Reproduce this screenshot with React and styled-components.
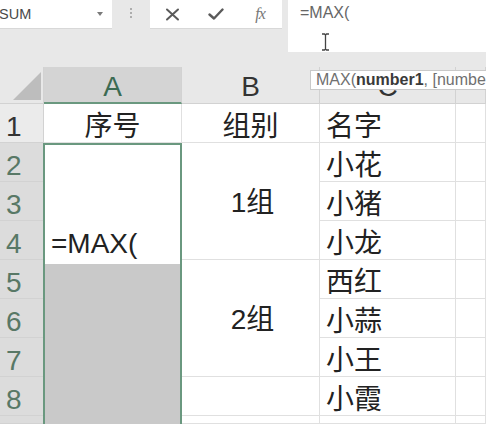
import React from 'react'
import styled, { createGlobalStyle } from 'styled-components'

const GREEN = '#6a987f'
const GRID = '#e0e0e0'
const HEAD_LINE = '#d2d2d2'

const GlobalStyle = createGlobalStyle`
  html, body {
    margin: 0;
    padding: 0;
    background: #e8e8e8;
  }
  body {
    font-family: "Liberation Sans", "Noto Sans CJK SC", sans-serif;
    overflow: hidden;
  }
`

const Page = styled.div`
  position: relative;
  width: 486px;
  height: 424px;
  overflow: hidden;
  background: #e8e8e8;
`

const Toolbar = styled.div`
  display: flex;
  align-items: flex-start;
  height: 67px;
`

const NameBox = styled.div`
  width: 112px;
  height: 28px;
  box-sizing: border-box;
  padding-right: 9px;
  display: flex;
  align-items: center;
  justify-content: space-between;
  background: #fff;
  box-shadow: 0 1px 0 #d8d8d8;
  font-size: 14.5px;
  color: #4a4a4a;
`

const NameText = styled.span`
  margin-left: -1px;
`

const Caret = styled.span`
  width: 0;
  height: 0;
  border-left: 3px solid transparent;
  border-right: 3px solid transparent;
  border-top: 4px solid #7a7a7a;
`

const Grip = styled.div`
  width: 38px;
  height: 26px;
  display: flex;
  flex-direction: column;
  align-items: center;
  justify-content: center;
  gap: 2px;
`

const Dot = styled.span`
  width: 2px;
  height: 2px;
  border-radius: 50%;
  background: #9a9a9a;
`

const FxButtons = styled.div`
  width: 132px;
  height: 28px;
  display: flex;
  align-items: center;
  background: #fff;
  box-shadow: 0 1px 0 #d8d8d8;
`

const FxButton = styled.div`
  width: 44px;
  display: flex;
  justify-content: center;
  align-items: center;
  color: #5a5a5a;
`

const FxLabel = styled.span`
  font-family: "Liberation Serif", serif;
  font-style: italic;
  font-size: 16px;
  color: #777;
  letter-spacing: -1px;
`

const FormulaBar = styled.div`
  position: relative;
  flex: 1;
  height: 52px;
  margin-left: 6px;
  box-sizing: border-box;
  padding: 4px 0 0 12px;
  background: #fff;
  font-size: 16px;
  line-height: 18px;
  color: #666;
`

const Beam = styled.svg`
  position: absolute;
  left: 33px;
  top: 33px;
`

const Sheet = styled.div`
  display: grid;
  grid-template-columns: 44px 138px 138px 136px 1fr;
  grid-template-rows: 37px repeat(8, 39px) 1fr;
  height: 357px;
  background: #fff;
  font-size: 28px;
  color: #222;
`

const Corner = styled.div`
  position: relative;
  background: #e8e8e8;
  border-right: 1px solid ${HEAD_LINE};
  border-bottom: 1px solid ${HEAD_LINE};
  &::after {
    content: '';
    position: absolute;
    right: 2px;
    bottom: 3px;
    width: 0;
    height: 0;
    border-left: 28px solid transparent;
    border-bottom: 28px solid #bdbdbd;
  }
`

const ColHead = styled.div`
  box-sizing: border-box;
  display: flex;
  align-items: center;
  justify-content: center;
  padding-top: 4px;
  background: ${p => (p.$active ? '#d4d4d4' : '#e8e8e8')};
  color: ${p => (p.$active ? '#3c6b53' : '#333')};
  border-right: 1px solid ${HEAD_LINE};
  border-bottom: ${p => (p.$active ? `2px solid ${GREEN}` : `1px solid ${HEAD_LINE}`)};
`

const RowHead = styled.div`
  box-sizing: border-box;
  display: flex;
  align-items: flex-end;
  padding: 0 0 0 6px;
  line-height: 30px;
  background: ${p => (p.$active ? '#dcdcdc' : '#ebebeb')};
  color: ${p => (p.$active ? '#587866' : '#333')};
  border-bottom: 1px solid ${HEAD_LINE};
  border-right: 1px solid ${p => (p.$active ? GREEN : HEAD_LINE)};
`

const Cell = styled.div`
  box-sizing: border-box;
  display: flex;
  align-items: ${p => (p.$middle ? 'center' : 'flex-end')};
  justify-content: ${p => (p.$center ? 'center' : 'flex-start')};
  padding: ${p => (p.$middle ? '4px 0 0 4px' : p.$center ? '0' : '0 0 0 6px')};
  line-height: 30px;
  border-right: 1px solid ${GRID};
  border-bottom: 1px solid ${GRID};
`

const Selection = styled.div`
  grid-column: 2;
  grid-row: 3 / 11;
  display: flex;
  flex-direction: column;
  border: 2px solid ${GREEN};
  border-bottom: none;
  margin-left: -1px;
`

const EditCell = styled.div`
  height: 115px;
  display: flex;
  align-items: flex-end;
  padding: 0 0 4px 6px;
  background: #fff;
  line-height: 32px;
  color: #222;
`

const Fill = styled.div`
  flex: 1;
  background: #c9c9c9;
`

const Tip = styled.div`
  position: absolute;
  left: 310px;
  top: 70px;
  height: 20px;
  width: 200px;
  box-sizing: border-box;
  padding-left: 5px;
  background: #fff;
  border: 1px solid #c9c9c9;
  font-size: 16px;
  line-height: 18px;
  color: #707070;
  white-space: nowrap;
`

const Arg = styled.b`
  color: #3a3a3a;
`

const names = ['小花', '小猪', '小龙', '西红', '小蒜', '小王', '小霞']

export default function App() {
  return (
    <Page>
      <GlobalStyle />
      <Toolbar>
        <NameBox>
          <NameText>SUM</NameText>
          <Caret />
        </NameBox>
        <Grip>
          <Dot />
          <Dot />
          <Dot />
        </Grip>
        <FxButtons>
          <FxButton>
            <svg width="15" height="13" viewBox="0 0 15 13">
              <path d="M2 1.5 L13 11.5 M13 1.5 L2 11.5" stroke="#5a5a5a" strokeWidth="2" strokeLinecap="round" fill="none" />
            </svg>
          </FxButton>
          <FxButton>
            <svg width="16" height="12" viewBox="0 0 16 12">
              <path d="M1.5 6.5 L6 10.5 L14.5 1.5" stroke="#5a5a5a" strokeWidth="2.4" strokeLinecap="round" strokeLinejoin="round" fill="none" />
            </svg>
          </FxButton>
          <FxButton>
            <FxLabel>fx</FxLabel>
          </FxButton>
        </FxButtons>
        <FormulaBar>
          =MAX(
          <Beam width="9" height="18" viewBox="0 0 9 18">
            <path d="M1 1 H3.5 L4.5 2 L5.5 1 H8 M4.5 2 V16 M1 17 H3.5 L4.5 16 L5.5 17 H8" stroke="#444" strokeWidth="1.3" fill="none" />
          </Beam>
        </FormulaBar>
      </Toolbar>

      <Sheet>
        <Corner />
        <ColHead $active>A</ColHead>
        <ColHead>B</ColHead>
        <ColHead>C</ColHead>
        <ColHead />

        {[1, 2, 3, 4, 5, 6, 7, 8, 9].map(n => (
          <RowHead key={n} $active={n > 1} style={{ gridColumn: 1, gridRow: n + 1 }}>
            {n < 9 ? n : ''}
          </RowHead>
        ))}

        <Cell $center style={{ gridColumn: 2, gridRow: 2 }}>序号</Cell>
        <Selection>
          <EditCell>=MAX(</EditCell>
          <Fill />
        </Selection>

        <Cell $center style={{ gridColumn: 3, gridRow: 2 }}>组别</Cell>
        <Cell $center $middle style={{ gridColumn: 3, gridRow: '3 / 6' }}>1组</Cell>
        <Cell $center $middle style={{ gridColumn: 3, gridRow: '6 / 9' }}>2组</Cell>
        <Cell style={{ gridColumn: 3, gridRow: 9 }} />
        <Cell style={{ gridColumn: 3, gridRow: 10 }} />

        <Cell style={{ gridColumn: 4, gridRow: 2 }}>名字</Cell>
        {names.map((name, i) => (
          <Cell key={name} style={{ gridColumn: 4, gridRow: i + 3 }}>{name}</Cell>
        ))}
        <Cell style={{ gridColumn: 4, gridRow: 10 }} />

        {[2, 3, 4, 5, 6, 7, 8, 9, 10].map(r => (
          <Cell key={r} style={{ gridColumn: 5, gridRow: r }} />
        ))}
      </Sheet>

      <Tip>
        MAX(<Arg>number1</Arg>, [number2], ...)
      </Tip>
    </Page>
  )
}
